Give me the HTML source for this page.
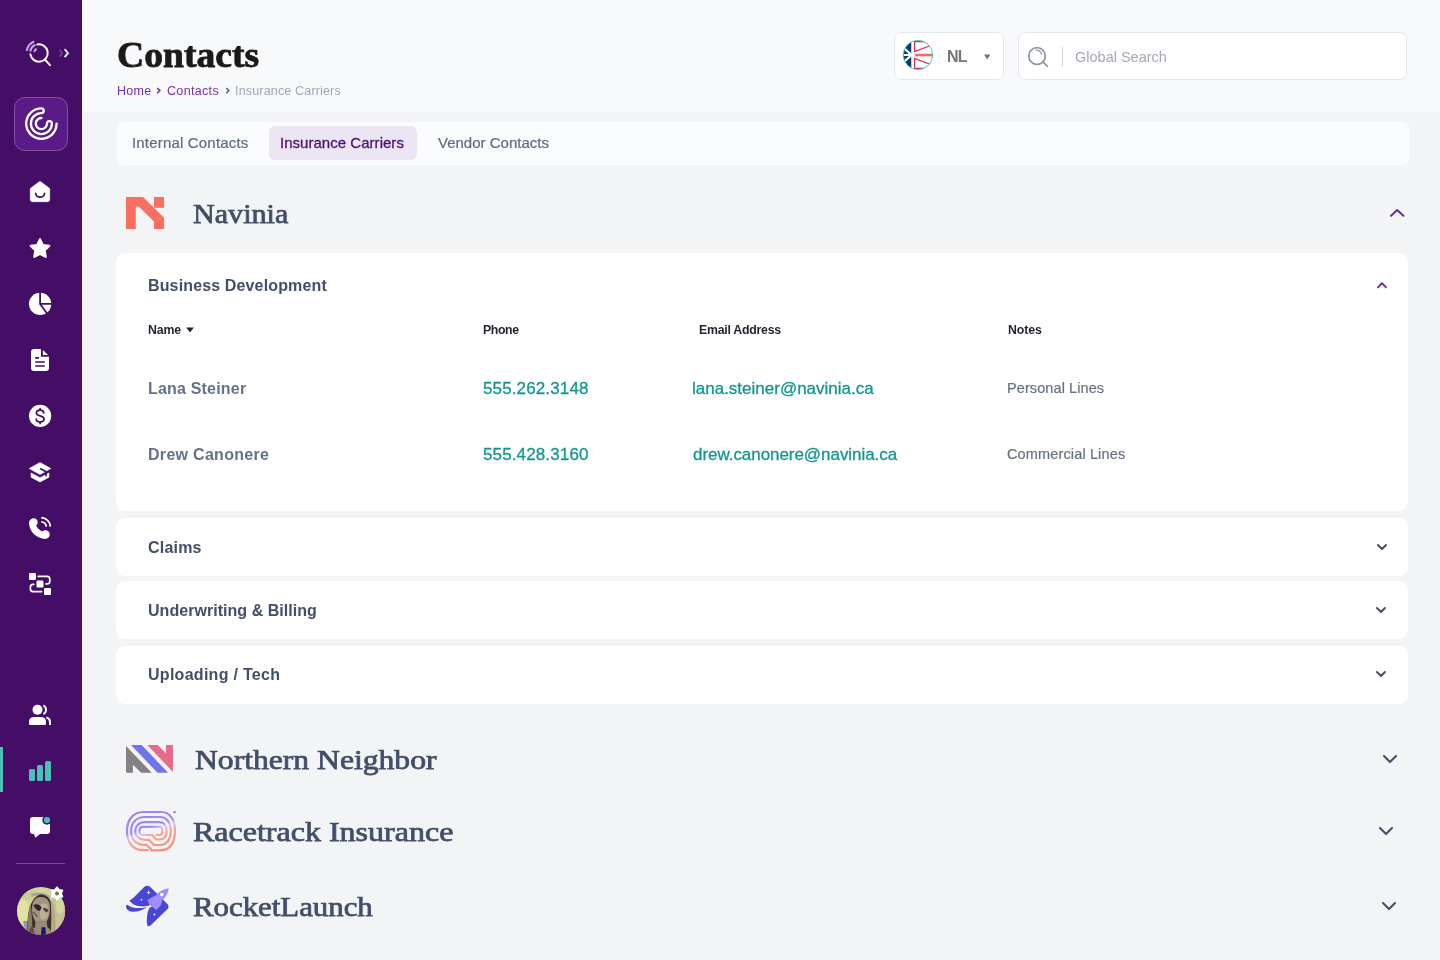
<!DOCTYPE html>
<html lang="en">
<head>
<meta charset="utf-8">
<title>Contacts</title>
<style>
*{box-sizing:border-box;margin:0;padding:0}
html,body{width:1440px;height:960px;overflow:hidden;background:#f3f4f6;font-family:"Liberation Sans",sans-serif;}
.abs{position:absolute}
#side{position:absolute;left:0;top:0;width:82px;height:960px;background:#440e66}
#top{position:absolute;left:82px;top:0;width:1358px;height:112px;background:#f8f9fb}
.t{position:absolute;white-space:nowrap;line-height:20px;will-change:transform}
h1{position:absolute;left:117px;top:34.3px;font-family:"Liberation Serif",serif;font-weight:bold;font-size:36px;line-height:42px;color:#1a1a1a;-webkit-text-stroke:0.8px #1a1a1a;white-space:nowrap;transform-origin:0 0;transform:scaleX(1.045);will-change:transform}
.bc{font-size:12.5px;color:#7b2fa3}
.box{position:absolute;background:#fff;border:1px solid #e5e7ed;border-radius:7px}
.tabs{position:absolute;left:117px;top:122px;width:1292px;height:43px;background:#fbfcfd;border-radius:6px}
.tab{font-size:15px;color:#5f6982;-webkit-text-stroke:0.2px #5f6982}
.tabon{position:absolute;left:269px;top:126px;width:148px;height:34px;background:#ece6f4;border-radius:6px}
.carrier{font-family:"Liberation Serif",serif;font-size:27.5px;line-height:36px;color:#434f68;-webkit-text-stroke:0.75px #434f68;transform-origin:0 0}
.card{position:absolute;left:116px;width:1292px;background:#fff;border-radius:9px}
.ct{font-weight:bold;font-size:16px;color:#434f68}
.th{font-weight:bold;font-size:12.3px;color:#1f2330}
.nm{font-weight:bold;font-size:16px;color:#65708a}
.lk{font-size:17px;color:#12968f;-webkit-text-stroke:0.3px #12968f}
.nt{font-size:14.5px;color:#667085;-webkit-text-stroke:0.2px #667085}
svg{position:absolute;left:0;top:0;overflow:visible}
</style>
</head>
<body>
<div id="top"></div>
<div id="side"></div>
<h1 id="h1">Contacts</h1>
<div class="t bc" id="bc1" style="left:116.6px;top:80.6px;letter-spacing:0.3px">Home</div>
<div class="t bc" id="bc2" style="left:167.4px;top:80.6px;letter-spacing:0.33px">Contacts</div>
<div class="t bc" id="bc3" style="left:235px;top:80.6px;color:#a1a6b6;letter-spacing:0.17px">Insurance Carriers</div>

<div class="box" style="left:894px;top:32px;width:110px;height:48px"></div>
<div class="t" id="nl" style="left:947px;top:47px;font-size:16px;letter-spacing:-0.9px;color:#757575;font-weight:bold">NL</div>
<div class="box" style="left:1018px;top:32px;width:389px;height:48px"></div>
<div class="abs" style="left:1062px;top:47px;width:1.4px;height:20px;background:#d5d8e2"></div>
<div class="t" id="gs" style="left:1074.6px;top:47px;font-size:14.5px;color:#a2a8b8">Global Search</div>

<div class="tabs"></div>
<div class="tabon"></div>
<div class="t tab" id="tab1" style="left:132px;top:133.4px;letter-spacing:0.18px">Internal Contacts</div>
<div class="t tab" id="tab2" style="left:280px;top:133.4px;letter-spacing:0.03px;color:#4a1272;-webkit-text-stroke:0.3px #4a1272">Insurance Carriers</div>
<div class="t tab" id="tab3" style="left:437.6px;top:133.4px">Vendor Contacts</div>

<div class="t carrier" id="c1" style="left:192.6px;top:195.7px;transform:scaleX(1.095)">Navinia</div>

<div class="card" style="top:253px;height:258px"></div>
<div class="card" style="top:518px;height:58px"></div>
<div class="card" style="top:581px;height:58px"></div>
<div class="card" style="top:646px;height:58px"></div>

<div class="t ct" id="bd" style="left:148px;top:276px;letter-spacing:0.14px">Business Development</div>
<div class="t th" id="th1" style="left:148px;top:320px;letter-spacing:-0.1px">Name</div>
<div class="t th" id="th2" style="left:482.5px;top:320px;letter-spacing:-0.4px">Phone</div>
<div class="t th" id="th3" style="left:699px;top:320px;letter-spacing:-0.24px">Email Address</div>
<div class="t th" id="th4" style="left:1007.5px;top:320px;letter-spacing:-0.1px">Notes</div>
<div class="t nm" id="n1" style="left:147.6px;top:379.2px;letter-spacing:0.19px">Lana Steiner</div>
<div class="t lk" id="p1" style="left:482.5px;top:379px;letter-spacing:0.13px">555.262.3148</div>
<div class="t lk" id="e1" style="left:692.4px;top:379px">lana.steiner@navinia.ca</div>
<div class="t nt" id="o1" style="left:1006.6px;top:378.4px;letter-spacing:0.09px">Personal Lines</div>
<div class="t nm" id="n2" style="left:147.6px;top:445.2px;letter-spacing:0.3px">Drew Canonere</div>
<div class="t lk" id="p2" style="left:482.5px;top:445px;letter-spacing:0.13px">555.428.3160</div>
<div class="t lk" id="e2" style="left:693px;top:445px;letter-spacing:-0.05px">drew.canonere@navinia.ca</div>
<div class="t nt" id="o2" style="left:1007.4px;top:444.4px;letter-spacing:0.14px">Commercial Lines</div>

<div class="t ct" id="s1" style="left:148px;top:538.2px;letter-spacing:0.2px">Claims</div>
<div class="t ct" id="s2" style="left:148px;top:601px;letter-spacing:0.04px">Underwriting &amp; Billing</div>
<div class="t ct" id="s3" style="left:148px;top:665px;letter-spacing:0.28px">Uploading / Tech</div>

<div class="t carrier" id="c2" style="left:194.6px;top:742.2px;transform:scaleX(1.150)">Northern Neighbor</div>
<div class="t carrier" id="c3" style="left:192.8px;top:813.7px;transform:scaleX(1.164)">Racetrack Insurance</div>
<div class="t carrier" id="c4" style="left:192.8px;top:889px;transform:scaleX(1.121)">RocketLaunch</div>
<svg width="1440" height="960" viewBox="0 0 1440 960">
<!-- top search icon -->
<g fill="none">
  <path d="M37.34,44.46 A8.7,8.7 0 1 1 30.41,54.36" stroke="#fff" stroke-width="2" stroke-linecap="round"/>
  <path d="M45,59.6 L50,65.2" stroke="#fff" stroke-width="2" stroke-linecap="round"/>
  <path d="M26.69,50.83 A12.5,12.5 0 0 1 34.12,41.49" stroke="#c4a8e8" stroke-width="2.1"/>
  <path d="M30.24,51.45 A8.9,8.9 0 0 1 35.52,44.81" stroke="#c4a8e8" stroke-width="2.1"/>
  <path d="M34.19,52.07 A4.9,4.9 0 0 1 36.62,48.71" stroke="#c4a8e8" stroke-width="2.1"/>
  <path d="M59.6,49.6 L62.2,53.2 L59.6,56.8" stroke="#7a3fa6" stroke-width="1.6"/>
  <path d="M64.6,49.2 L68,53.2 L64.6,57.2" stroke="#dce9e4" stroke-width="2"/>
</g>
<!-- logo box -->
<rect x="14.5" y="97.5" width="53" height="53" rx="10" fill="#5a1b87" stroke="#8153a8" stroke-width="1"/>
<path d="M56.6,123.6 A15.2,15.2 0 1 1 41.4,108.4 A2.35,2.35 0 0 1 41.4,113.1 A10.5,10.5 0 1 0 51.9,123.6 A2.45,2.45 0 0 0 47,123.6 A5.6,5.6 0 1 1 41.4,118" fill="none" stroke="#fff" stroke-width="2.3" stroke-linecap="round"/>
<!-- home -->
<path d="M40,181.2 L49.1,188 Q49.7,188.5 49.7,189.4 V199.6 Q49.7,201.7 47.6,201.7 H32.4 Q30.3,201.7 30.3,199.6 V189.4 Q30.3,188.5 30.9,188 Z" fill="#fff" stroke="#fff" stroke-width="0.6" stroke-linejoin="round"/>
<path d="M35.7,193.5 A4.4,3.7 0 0 0 44.5,193.5" fill="none" stroke="#440e66" stroke-width="1.8" stroke-linecap="round"/>
<!-- star -->
<path d="M40,239.4 L42.75,245.2 L49.1,246 L44.45,250.4 L45.65,256.7 L40,253.6 L34.35,256.7 L35.55,250.4 L30.9,246 L37.25,245.2 Z" fill="#fff" stroke="#fff" stroke-width="2.4" stroke-linejoin="round"/>
<!-- pie -->
<circle cx="40.1" cy="303.9" r="11.1" fill="#fff"/>
<path d="M40.1,292 V303.9 H52 M40.1,303.9 L47,313.6" fill="none" stroke="#440e66" stroke-width="1.8"/>
<!-- document -->
<path d="M34,349 H41 V356.7 H49 V368 Q49,371 46,371 H34 Q31,371 31,368 V352 Q31,349 34,349 Z" fill="#fff"/>
<path d="M42.9,349.9 L48,354.9 H42.9 Z" fill="#fff"/>
<path d="M35.2,357.9 H39 M35.2,362 H44.8 M35.2,365.95 H44.8" stroke="#440e66" stroke-width="1.6" fill="none"/>
<!-- dollar -->
<circle cx="40.1" cy="415.9" r="11.1" fill="#fff"/>
<path d="M43.7,412.9 C43.7,411.2 42.3,410.2 40.1,410.2 C37.9,410.2 36.4,411.3 36.4,413 C36.4,414.8 38,415.4 40.1,415.9 C42.3,416.4 44,417 44,419 C44,420.8 42.4,421.9 40.1,421.9 C37.8,421.9 36.2,420.8 36.2,419" fill="none" stroke="#440e66" stroke-width="1.7" stroke-linecap="round"/>
<path d="M40.1,408.6 V410.2 M40.1,421.9 V423.4" stroke="#440e66" stroke-width="1.7" stroke-linecap="round"/>
<!-- grad cap -->
<path d="M40,462.5 L50.8,468.5 L40,474.6 L29.2,468.5 Z" fill="#fff" stroke="#fff" stroke-width="0.6" stroke-linejoin="round"/>
<path d="M31,472.9 L40,477.7 L49,472.9 V477.2 L40,482 L31,477.2 Z" fill="#fff" stroke="#fff" stroke-width="0.6" stroke-linejoin="round"/>
<path d="M40.6,468.8 L46,471.7 V475.4" fill="none" stroke="#440e66" stroke-width="1.7" stroke-linecap="round" stroke-linejoin="round"/>
<!-- phone -->
<path d="M29,523.4 C29,520.6 31,518.3 33.75,518.3 C36.2,518.3 37.7,520.2 37.7,522.6 C37.7,524 36.9,524.8 36.2,525.4 C37.2,528 39.6,530.3 42.5,531.6 C43.2,530.8 44.2,530.3 45.4,530.3 C48,530.3 49.8,532 49.8,534.3 C49.8,537 47.8,539 45.3,539 C36.6,538.4 29.6,531.6 29,523.4 Z" fill="#fff"/>
<path d="M41.3,517.7 A9.2,9.2 0 0 1 50.3,526.6" fill="none" stroke="#fff" stroke-width="1.8"/>
<path d="M41.3,521.8 A5,5 0 0 1 46.2,526.6" fill="none" stroke="#fff" stroke-width="1.8"/>
<!-- workflow -->
<rect x="29" y="573" width="7" height="7" rx="1.2" fill="#fff"/>
<rect x="36.5" y="580.5" width="7" height="7" rx="1.2" fill="#fff"/>
<rect x="44" y="588" width="7" height="7" rx="1.2" fill="#fff"/>
<path d="M38.3,576.4 H47 Q49.8,576.4 49.8,579.2 V581.2 Q49.8,583.9 47,583.9 H46" fill="none" stroke="#fff" stroke-width="1.7" stroke-linecap="round"/>
<path d="M33.8,584.3 H33 Q30.4,584.3 30.4,587 V589 Q30.4,591.6 33,591.6 H41.6" fill="none" stroke="#fff" stroke-width="1.7" stroke-linecap="round"/>
<!-- users -->
<circle cx="37.5" cy="709.8" r="5" fill="#fff"/>
<path d="M29,723.8 V721.9 Q29,717 34,717 H41 Q46,717 46,721.9 V723.8 Q46,725 44.8,725 H30.2 Q29,725 29,723.8 Z" fill="#fff"/>
<path d="M43.4,705.4 A5,5 0 0 1 43.4,714.2" fill="none" stroke="#fff" stroke-width="1.9"/>
<path d="M46.3,717.6 Q50,718.4 50,722.4 V725" fill="none" stroke="#fff" stroke-width="2"/>
<!-- active indicator + bars -->
<rect x="0" y="747" width="3" height="45" fill="#4cc0b5"/>
<rect x="29" y="769" width="6" height="12" rx="1.6" fill="#4cc0b5"/>
<rect x="37" y="765" width="6" height="16" rx="1.6" fill="#4cc0b5"/>
<rect x="45" y="761" width="6" height="20" rx="1.6" fill="#4cc0b5"/>
<!-- chat -->
<path d="M33,817 H47 Q50,817 50,820 V831 Q50,834 47,834 H40 L35.4,837.8 L33.9,834 H33 Q30,834 30,831 V820 Q30,817 33,817 Z" fill="#fff"/>
<circle cx="47" cy="820" r="4.7" fill="#440e66"/>
<circle cx="47" cy="820" r="3.1" fill="#4cc0b5"/>
<!-- divider -->
<rect x="16" y="863" width="49" height="1" fill="#7c48a2"/>
<!-- avatar -->
<defs>
  <clipPath id="av"><circle cx="41.1" cy="911" r="24"/></clipPath>
  <clipPath id="fl"><circle cx="918" cy="55" r="14.6"/></clipPath>
  <linearGradient id="rt" gradientUnits="userSpaceOnUse" x1="143" y1="812" x2="156" y2="851">
    <stop offset="0" stop-color="#9784f8"/><stop offset="0.4" stop-color="#a08cf7"/><stop offset="0.5" stop-color="#dcc6ee"/><stop offset="0.6" stop-color="#f6a79c"/><stop offset="1" stop-color="#fa8c78"/>
  </linearGradient>
  <pattern id="dots" x="126" y="745" width="3.1" height="4.1" patternUnits="userSpaceOnUse">
    <circle cx="0.8" cy="1" r="0.5" fill="#5d6f9c" fill-opacity="0.85"/><circle cx="2.35" cy="3.05" r="0.5" fill="#5d6f9c" fill-opacity="0.85"/>
  </pattern>
</defs>
<g clip-path="url(#av)">
  <rect x="16" y="886" width="50" height="50" fill="#d3d696"/>
  <ellipse cx="23" cy="912" rx="7" ry="12" fill="#dfe2a0"/>
  <ellipse cx="30" cy="895" rx="9" ry="5" fill="#c9cc90"/>
  <path d="M52,898 L66,894 L66,936 L52,936 Z" fill="#c6c293"/>
  <ellipse cx="60" cy="906" rx="4" ry="8" fill="#d3d69a"/>
  <path d="M23,921 L29,921 L29,931 L25,929 Z" fill="#8f95b6"/>
  <path d="M31,894.5 C35,891.8 46,891.8 50.5,896.5 L50,898.5 C45,894.5 36,894.5 31.5,896.8 Z" fill="#8e95ae" fill-opacity="0.75"/>
  <path d="M27.5,936 C27,918 28,899 40,894.5 C50,894 53,903 52.5,917 L54,936 Z" fill="#3a302b"/>
  <path d="M28,936 C27.5,922 28,910 30.5,904 C32,910 32,925 33,936 Z" fill="#8b7969"/>
  <path d="M50.5,899 C55,904 56,918 55.5,936 L50.5,936 C51.5,922 51.5,910 50.5,899 Z" fill="#b5a785"/>
  <path d="M32,909 C32,900 36,897 41,897 C47,897 50,901 50,909 C50,918 46,924.5 41,924.5 C36,924.5 32,918 32,909 Z" fill="#a49483"/>
  <path d="M40,905 C42,903 46,903 48,906 L48,916 C46,920 42,921 40,918 Z" fill="#b9ae92"/>
  <path d="M33.5,905 C36,903.5 40,904.5 41.5,907.5 L40,911 C37,910.5 35,909 33.5,905 Z" fill="#2e2623"/>
  <path d="M43,908.5 C45,907.5 47.5,908.5 48.5,910.5 L47,912.5 C45.5,912 44,911 43,908.5 Z" fill="#4a403a"/>
  <path d="M33.5,912 L37.5,917" stroke="#4a3e38" stroke-width="1.1" fill="none"/>
  <path d="M35.5,921 L46.5,921 L47.5,927.5 C50,928.5 51.5,931 52,936 L29,936 C30,930 32,928 35,927.5 Z" fill="#9c8a79"/>
  <path d="M28.5,936 C29,930 30,927 33,926 L35,936 Z" fill="#5e5046"/>
  <path d="M41.6,927.3 L45.4,927.3 L46,936 L41,936 Z" fill="#1c1568"/>
</g>
<!-- gear -->
<g transform="translate(57,893.5)">
  <path d="M0,-6.3 L2.1,-3.7 L5.5,-3.2 L4.2,0 L5.5,3.2 L2.1,3.7 L0,6.3 L-2.1,3.7 L-5.5,3.2 L-4.2,0 L-5.5,-3.2 L-2.1,-3.7 Z" fill="#fff" stroke="#fff" stroke-width="1.6" stroke-linejoin="round"/>
  <circle cx="0" cy="0" r="2" fill="#7b7458"/>
</g>
<!-- NL flag -->
<circle cx="918" cy="55" r="15" fill="#fff"/>
<g clip-path="url(#fl)">
  <rect x="902" y="39" width="9.6" height="32" fill="#0c3a66"/>
  <path d="M911.6,55 L901,45.5 M911.6,55 L901,64.5 M911.6,55 H901" stroke="#fff" stroke-width="2.2" fill="none"/>
  <rect x="911.4" y="39" width="2.8" height="32" fill="#fff"/>
  <path d="M914.6,41.6 H934 L929.3,46.1 L914.6,51.6 Z" fill="none" stroke="#d92a4e" stroke-width="1.2"/>
  <path d="M914.6,68.4 H934 L929.3,63.9 L914.6,58.4 Z" fill="none" stroke="#d92a4e" stroke-width="1.2"/>
  <rect x="914.4" y="53.2" width="19" height="3.6" fill="#fbd5d0"/>
  <rect x="916.4" y="54" width="17" height="2.1" fill="#f96a5a"/>
  <rect x="915.6" y="54.3" width="1.2" height="1.5" fill="#d92a4e"/>
</g>
<circle cx="918" cy="55" r="14.7" fill="none" stroke="#3fbfb2" stroke-width="0.9"/>
<path d="M984,54.6 H990.4 L987.2,59.4 Z" fill="#757575"/>
<!-- search icon in box -->
<circle cx="1037" cy="56" r="8.3" fill="none" stroke="#9198ab" stroke-width="1.8"/>
<path d="M1043.2,62.4 L1047.4,66.2" stroke="#9198ab" stroke-width="1.8" stroke-linecap="round"/>
<path d="M1036,50.2 A5.8,5.8 0 0 1 1041.6,54.2" fill="none" stroke="#9299ab" stroke-width="1.3" stroke-linecap="round"/>
<!-- breadcrumb seps -->
<path d="M157.2,88 L159.9,90.6 L157.2,93.2" fill="none" stroke="#7b2fa3" stroke-width="1.5"/>
<path d="M226.2,88 L228.9,90.6 L226.2,93.2" fill="none" stroke="#5d6480" stroke-width="1.5"/>
<!-- Name sort caret -->
<path d="M186.2,327.4 H193.8 L190,332.4 Z" fill="#1f2330"/>
<!-- Navinia logo -->
<path d="M126,197 H143 L164,217.7 V229 H154 V221.4 L138.7,206.5 H135.8 V229 H126 Z" fill="#f96f61"/>
<rect x="154" y="197" width="10" height="10.8" fill="#f96f61"/>
<!-- chevrons -->
<g fill="none" stroke-linecap="round" stroke-linejoin="round">
  <path d="M1391,215.8 L1397.2,210 L1403.4,215.8" stroke="#6b2c91" stroke-width="2"/>
  <path d="M1378,287.4 L1382,283.2 L1386,287.4" stroke="#6b2c91" stroke-width="1.9"/>
  <g stroke="#414c66" stroke-width="1.9">
    <path d="M1378,545 L1382,549 L1386,545"/>
    <path d="M1377,608 L1381,612 L1385,608"/>
    <path d="M1377,672 L1381,676 L1385,672"/>
  </g>
  <g stroke="#414c66" stroke-width="2">
    <path d="M1384,756 L1390,762 L1396,756"/>
    <path d="M1380,828 L1386,834 L1392,828"/>
    <path d="M1383,903 L1389,909 L1395,903"/>
  </g>
</g>
<!-- Northern Neighbor logo -->
<path d="M126,746 L151.7,772.8 H141.2 L132.9,764.8 V772.8 H126 Z" fill="#8a827d"/>
<path d="M126,746 L151.7,772.8 H141.2 L132.9,764.8 V772.8 H126 Z" fill="url(#dots)"/>
<path d="M131,745 H141.7 L168.1,772.8 H157.5 Z" fill="#7273e8"/>
<path d="M147.3,745 H157.7 L166,753.2 V745 H173 V772 Z" fill="#e56b8b"/>
<!-- Racetrack logo -->
<g fill="none" stroke="url(#rt)" stroke-width="2.2" stroke-linecap="round" stroke-linejoin="round">
  <path d="M147.6,850.2 H143 C132,850.2 127,841 127,831 C127,821 132,812 144,812 H161 C171,812 175,821 175,831 C175,841 171,850.4 161,850.4 H152 L146.4,844.8"/>
  <path d="M146.4,844.8 H144 C135,844.8 131.1,838 131.1,831 C131.1,824 135,817 145,817 H160 C167.5,817 170.8,824 170.8,831 C170.8,838 167.5,845 160,845 H154 L149,839.8"/>
  <path d="M149,839.8 H145 C138.5,839.8 135.2,835.5 135.2,831 C135.2,826.5 138.5,822.2 145,822.2 H159 C164.5,822.2 166.6,826.5 166.6,831 C166.6,835.5 164.5,839.5 159,839.5 H156.5 L152.2,835"/>
  <path d="M152.2,835 H143 C140.5,835 139.4,833 139.4,831 C139.4,829 140.5,826.8 143,826.8 H159 C161.5,826.8 162.4,829 162.4,831 C162.4,833 161.5,835 159,835 H156.5"/>
</g>
<rect x="173.2" y="811.2" width="2.6" height="2" fill="#8d92a3"/>
<!-- Rocket logo -->
<path d="M129.4,900.2 Q131,899.8 133,898.2 L144.6,886.6 Q147.3,884.6 150,886.8 L158,894.6 L149.4,905.6 Q145,907 138.2,906 Q132,904.6 129.4,900.2 Z" fill="#4a45d2"/>
<path d="M149.4,908 L162.7,899.3 L167.8,904.4 Q169.6,907 167,909.6 L150.8,925.3 Q148.6,927.2 147.4,925.6 Q146.4,922 147,916.5 Q147.6,911 149.4,908 Z" fill="#4a45d2"/>
<path d="M126.2,905.4 Q127,904.4 128,905.2 Q134,909.6 147,907.2 Q141,911.4 133,911.8 Q127.4,911.4 126,907.4 Z" fill="#4a45d2"/>
<path d="M147.2,900 L155.4,895.6 Q160.5,889.6 168.8,888.2 Q167.6,895.6 162.2,900.3 L161.1,905 L156.5,910 L149.7,905 Z" fill="#9f8ef7"/>
<circle cx="161.9" cy="894.6" r="1.8" fill="#fff"/>
<g fill="#fff">
  <path d="M148.6,890.3 L149.2,891.9 L150.8,892.5 L149.2,893.1 L148.6,894.7 L148,893.1 L146.4,892.5 L148,891.9 Z"/>
  <path d="M141.4,898.2 L141.8,899.4 L143,899.8 L141.8,900.2 L141.4,901.4 L141,900.2 L139.8,899.8 L141,899.4 Z"/>
  <path d="M154.4,912.8 L154.8,914 L156,914.4 L154.8,914.8 L154.4,916 L154,914.8 L152.8,914.4 L154,914 Z"/>
</g>
</svg>
</body>
</html>
